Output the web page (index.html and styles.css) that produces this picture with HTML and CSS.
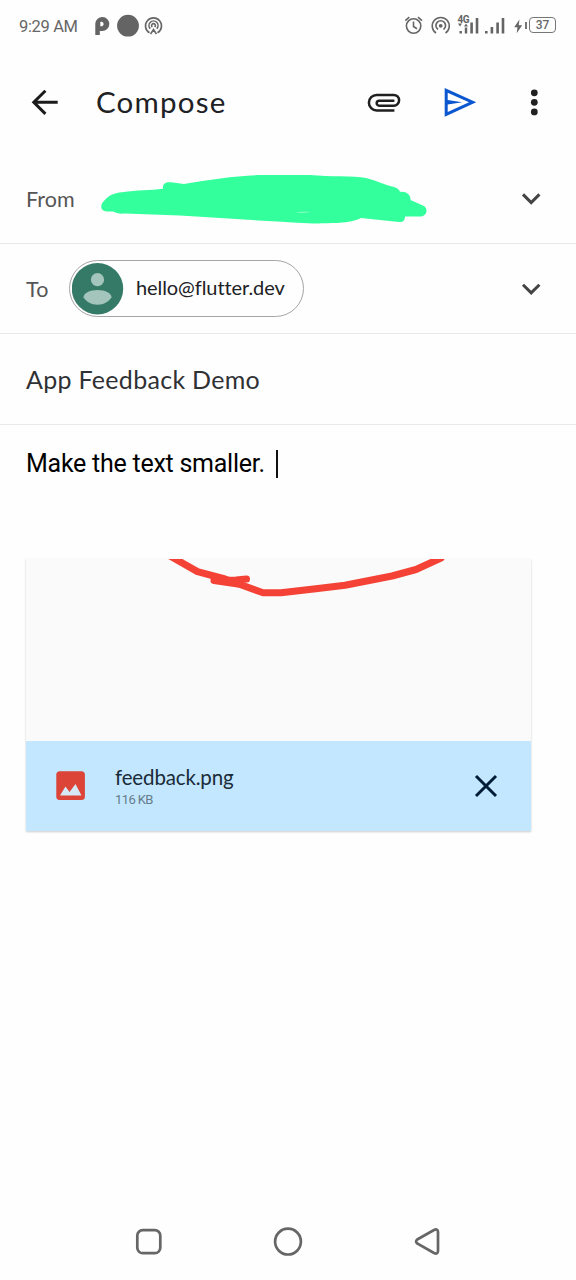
FILE: index.html
```html
<!DOCTYPE html>
<html lang="en">
<head>
<meta charset="utf-8">
<title>Compose</title>
<link rel="stylesheet" href="styles.css">
</head>
<body>
<div class="screen">
  <header class="status">
    <span class="time">9:29 AM</span>
    <svg class="status-left" width="76" height="50" viewBox="92 0 76 50">
      <path class="fill-gray" fill-rule="evenodd" d="M95.300 35V23.500a7 7 0 1 1 7 7.500h-2.500V35zM100.300 22v4.200h2a2.100 2.100 0 1 0-2-4.200z"/>
      <circle class="fill-gray" cx="128" cy="25.700" r="10.900"/>
      <g class="line-gray">
        <path d="M149.500 32.800a8 8 0 1 1 8 0M150.300 28.600a4.500 4.500 0 1 1 6.400 0M150.600 34l2.900-4.500 2.900 4.500"/>
        <path d="M152.300 27a1.900 1.900 0 1 1 2.400 0"/>
      </g>
    </svg>
    <div class="status-right">
      <svg width="125" height="50" viewBox="400 0 125 50">
        <g class="line-gray">
          <circle cx="413.600" cy="26" r="7.200"/>
          <path d="M413.500 21.500v5l3.500 2.200M405.300 20.600l4-3.400M418 17.200l4 3.400"/>
          <path d="M436 33a8.500 8.500 0 1 1 9.500 0M438 29.500a4.800 4.800 0 1 1 5.500 0"/>
        </g>
        <circle class="fill-gray" cx="440.700" cy="25.800" r="1.900"/>
        <text class="network" x="457.500" y="22.500">4G</text>
        <path class="fill-gray" d="M459.500 31h2.400v2.600h-2.400zM464.800 27.500h2.400v6.100h-2.400zM470.300 22.500h2.600v11.100h-2.600zM475.700 18h2.600v15.600h-2.600zM485 31h2.600v2.600H485zM490.600 27h2.600v6.600h-2.600zM496.300 22.500h2.600v11.100h-2.600zM501.700 18h2.600v15.600h-2.600zM458 23.500h4l-2 3zM464 26.500l2-3 2 3zM519.500 19.500l-5.300 7.700h3.300l-.8 6 5.500-8h-3.500z"/>
      </svg>
      <span class="battery-tip"></span>
      <span class="battery">37</span>
    </div>
  </header>

  <div class="appbar">
    <svg class="back" width="28" height="28" viewBox="31 88 28 28"><path d="M57.700 102.300H34M45.400 90.700L33.800 102.300l11.600 11.600"/></svg>
    <h1 class="title">Compose</h1>
    <svg class="attach" width="36" height="24" viewBox="365.300 90.500 36 24"><path d="M393.700 111H376a7.800 7.800 0 0 1 0-15.600h17a5.400 5.400 0 0 1 0 10.800h-14.500a2.500 2.500 0 0 1 0-5h15.200"/></svg>
    <svg class="send" width="34" height="32" viewBox="443 86 34 32"><path fill-rule="evenodd" d="M444.700 88l31.500 14.300-31.500 14.400zM447.700 92.800v7.200l14.500 2.300-14.500 2.300v7.300l21.300-9.600z"/></svg>
    <svg class="more" width="10" height="30" viewBox="529 87 10 30"><circle cx="534.300" cy="92.800" r="3.400"/><circle cx="534.300" cy="102.300" r="3.400"/><circle cx="534.300" cy="111.900" r="3.400"/></svg>
  </div>

  <div class="row from">
    <span class="label">From</span>
    <svg class="redaction" width="330" height="54" viewBox="99 172 330 54"><path d="M107 211.500C100.500 211.500 99.500 205 104 201C109 194.500 115 193 122 192.200C138 190 150 190.500 163 188.800C162 184 166 181.500 171 182.300L184 184C210 179.500 238 175.500 262 175H310C330 177 353 175.500 366 178C378 181 383 184.500 394 187C398 188 399.500 190 400 192C406 191 411 195 410.500 200L424 206C429 210 426 216.500 420 216.500H405C405 220 403 222.500 399 222L361 218C351 223.500 335 223 322 223.200C304 224 288 222 272 221.300L180 215.500L125 213.500C119 214 116 213 113 211.500Z"/><path class="gap" d="M296 212.500q7-1.300 15-.4-8 .9-15 .4z"/></svg>
    <svg class="chevron" width="22" height="16" viewBox="520 191.600 22 16"><path d="M523 195l8.200 8.200 8.200-8.200"/></svg>
  </div>

  <div class="row to">
    <span class="label label-to">To</span>
    <div class="chip">
      <svg class="avatar" width="52" height="52" viewBox="0.500 0.300 52 52"><circle class="disc" cx="26" cy="26" r="25.700"/><circle cx="26" cy="17" r="6.600"/><path d="M12 34.500C12 30 19 27.200 26 27.200s14 2.800 14 7.300C37.500 38.800 32.500 42 26 42s-11.500-3.200-14-7.500z"/></svg>
      <span class="email">hello@flutter.dev</span>
    </div>
    <svg class="chevron" width="22" height="16" viewBox="520 191.300 22 16"><path d="M523 195l8.200 8.200 8.200-8.200"/></svg>
  </div>

  <div class="row subject"><span class="subject-text">App Feedback Demo</span></div>

  <main class="body">
    <p class="message"><span class="message-text">Make the text smaller.</span><span class="caret"></span></p>
    <section class="attachment">
      <svg class="preview" width="505" height="182" viewBox="26 559 505 182">
        <path class="stroke" d="M170 556L197.500 571.600L225 579L263 592.700H281L318 588.500L345 585.200L392 576L416 569.500L441 558"/>
        <path class="stroke" d="M214 580.300L236 580L246.500 579M214 580.500L238 584"/>
      </svg>
      <div class="file">
        <svg class="image-icon" width="30" height="30" viewBox="0 0 30 30"><rect x=".3" y=".3" width="28.600" height="28.800" rx="3.500"/><path d="M4 24.500l5.500-9 4 5.500 6-8 6 11.500z"/></svg>
        <div class="info"><span class="name">feedback.png</span><span class="size">116 KB</span></div>
        <svg class="close" width="24" height="24" viewBox="0 0 24 24"><path d="M2 2l20 20M22 2L2 22"/></svg>
      </div>
    </section>
  </main>

  <nav class="nav">
    <svg width="30" height="32" viewBox="134 1226 30 32"><rect x="137.300" y="1230.200" width="23" height="23" rx="5.500"/></svg>
    <svg width="32" height="32" viewBox="272 1226 32 32"><circle cx="288" cy="1241.600" r="12.900"/></svg>
    <svg width="30" height="32" viewBox="412 1226 30 32"><path d="M417.200 1239.500L434 1230Q437.800 1228.300 438 1232V1251Q437.800 1254.700 434 1253L417.200 1243.500Q415 1241.500 417.200 1239.500Z"/></svg>
  </nav>
</div>
</body>
</html>
```

FILE: styles.css
```css
* { box-sizing: border-box; }
body { margin: 0; background: #fefefe; font-family: Lato, "Open Sans", sans-serif; color: #202124; }
svg { display: block; flex: none; fill: none; }
span { white-space: nowrap; }
.screen { width: 576px; height: 1280px; display: flex; flex-direction: column; overflow: hidden; }

.status { height: 50px; display: flex; align-items: center; padding: 0 20px 0 19px; color: #666; }
.time { width: 73px; font: 16.500px/20px Roboto, sans-serif; letter-spacing: -.35px; padding-top: 3px; }
.fill-gray { fill: #646464; }
.line-gray { stroke: #666; stroke-width: 1.600; }
.status-right { display: flex; align-items: center; margin-left: auto; }
.network { font: bold 10px Roboto, sans-serif; letter-spacing: -.5px; fill: #646464; }
.battery-tip { width: 2px; height: 7px; margin: 0 2px 0 0; background: #777; }
.battery { width: 27px; height: 16px; border: 1.500px solid #777; border-radius: 4px; font: 500 12px/14px Roboto, sans-serif; text-align: center; }

.appbar { height: 104px; display: flex; align-items: center; padding: 0 37px 0 31px; }
.back { stroke: #1b1b1b; stroke-width: 3; }
.title { margin: 0 0 0 37px; width: 270px; font-size: 29.500px; font-weight: 400; line-height: 36px; letter-spacing: 1.200px; }
.attach { stroke: #202020; stroke-width: 2.500; }
.send { margin-left: 41px; fill: #0b57d0; }
.more { margin-left: auto; fill: #202020; }

.row { display: flex; align-items: center; padding: 0 34px 0 26px; border-bottom: 1px solid #e9e9e9; }
.from { height: 90px; }
.label { width: 73px; font-size: 21.500px; line-height: 28px; color: #555; letter-spacing: .1px; }
.redaction { fill: #33ff9c; }
.redaction .gap { fill: #a5ffd2; }
.chevron { margin-left: auto; stroke: #444; stroke-width: 3; }
.to { height: 90px; }
.label-to { width: 43px; }
.chip { width: 235px; height: 57px; display: flex; align-items: center; gap: 12px; padding-left: 2px; border: 1.500px solid #a5a5a5; border-radius: 29px; }
.avatar { fill: #a3c5bb; }
.avatar .disc { fill: #357a67; }
.email { font-size: 20px; line-height: 26px; padding-bottom: 3px; letter-spacing: -.08px; }
.subject { height: 91px; }
.subject-text { font-size: 25px; line-height: 32px; letter-spacing: .3px; color: #303134; }

.body { flex: 1; padding: 22px 45px 0 26px; }
.message { display: flex; align-items: center; margin: 0; height: 34px; color: #000; font: 25px/32px Roboto, sans-serif; letter-spacing: -.25px; }
.caret { width: 2px; height: 28px; margin-left: 11px; background: #111; }
.attachment { margin-top: 78px; width: 505px; box-shadow: 0 1px 2px rgba(0, 0, 0, .2); }
.preview { background: #fafafa; }
.stroke { stroke: #f44336; stroke-width: 7; stroke-linecap: round; stroke-linejoin: round; }
.file { display: flex; align-items: center; height: 90px; padding: 0 33px 0 30px; background: #c2e7ff; }
.image-icon { fill: #db4437; }
.image-icon path { fill: #d6e8f5; }
.info { display: flex; flex-direction: column; margin-left: 29px; padding-top: 2px; }
.name { font-size: 20.500px; line-height: 25px; letter-spacing: -.15px; color: #1b2b38; }
.size { font: 13px/20px Roboto, sans-serif; letter-spacing: -.6px; color: #667c8b; }
.close { margin-left: auto; stroke: #001d35; stroke-width: 3; }

.nav { display: flex; justify-content: space-between; height: 54px; padding: 0 134px; }
.nav svg { stroke: #666; stroke-width: 2.700; }
```
